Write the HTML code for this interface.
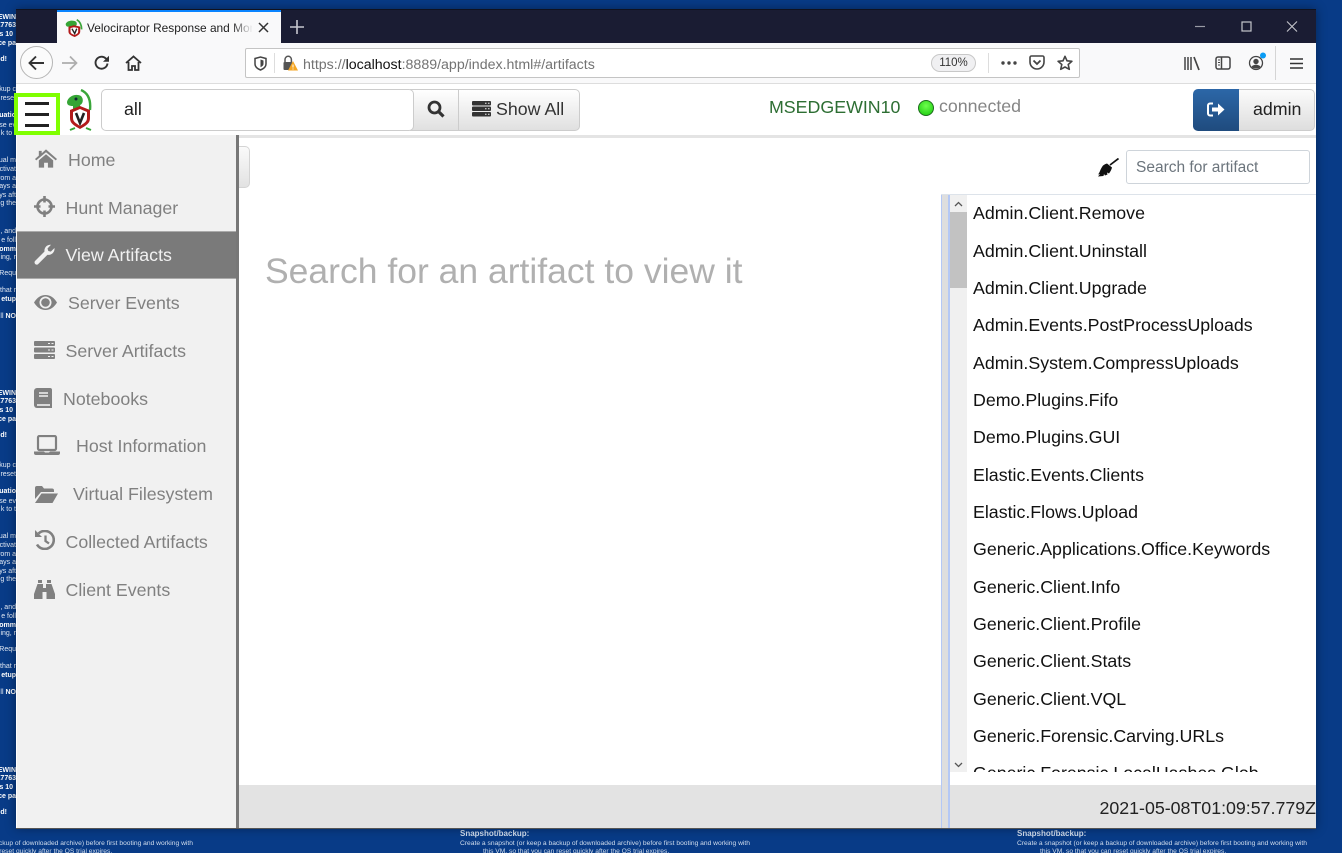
<!DOCTYPE html>
<html lang="en"><head><meta charset="utf-8"><title>Velociraptor Response and Monitoring</title>
<style>
html,body{margin:0;padding:0}
body{width:1342px;height:853px;overflow:hidden;position:relative;background:#083b87;font-family:"Liberation Sans",Arial,sans-serif}
.a,.a *{box-sizing:border-box}
.a{position:absolute}
.t{position:absolute;white-space:nowrap;line-height:20px}
.st{position:absolute;left:0;width:16px;height:376px;overflow:hidden}
.st p{position:absolute;right:0;margin:0;color:#e4ebf5;font-size:7px;line-height:8px;white-space:nowrap}
.st b{color:#fff}
.m{position:absolute;left:0;width:219px;height:48px}
.m span{position:absolute;font-size:17.8px;line-height:20px;color:#808080;white-space:nowrap}
.m svg{position:absolute}
.l{position:absolute;left:973px;font-size:17.8px;line-height:20px;color:#111;white-space:nowrap}
.bt{position:absolute;color:#d0dcec;font-size:6.7px;line-height:8px;white-space:nowrap}
svg{display:block}
</style></head><body>

<!-- desktop strips -->
<div class="st" style="top:0"><p style="top:14px"><b>EWIN</b></p><p style="top:22px"><b>17763</b></p><p style="top:31px;right:3px"><b>s 10</b></p><p style="top:40px"><b>ice pa</b></p><p style="top:56px;right:9px"><b>d!</b></p><p style="top:86px">kup c</p><p style="top:95px">reset</p><p style="top:112px"><b>uatio</b></p><p style="top:122px">se ev</p><p style="top:130px">k to t</p><p style="top:157px">ual m</p><p style="top:166px">ctivat</p><p style="top:175px">rom a</p><p style="top:183px">days a</p><p style="top:192px">ys aft</p><p style="top:200px">g the</p><p style="top:228px">, and</p><p style="top:237px">e foll</p><p style="top:246px"><b>omm</b></p><p style="top:254px">ing, r</p><p style="top:270px">Requ</p><p style="top:287px">that r</p><p style="top:296px"><b>etup</b></p><p style="top:313px">ill <b>NO</b></p></div>
<div class="st" style="top:376px"><p style="top:14px"><b>EWIN</b></p><p style="top:22px"><b>17763</b></p><p style="top:31px;right:3px"><b>s 10</b></p><p style="top:40px"><b>ice pa</b></p><p style="top:56px;right:9px"><b>d!</b></p><p style="top:86px">kup c</p><p style="top:95px">reset</p><p style="top:112px"><b>uatio</b></p><p style="top:122px">se ev</p><p style="top:130px">k to t</p><p style="top:157px">ual m</p><p style="top:166px">ctivat</p><p style="top:175px">rom a</p><p style="top:183px">days a</p><p style="top:192px">ys aft</p><p style="top:200px">g the</p><p style="top:228px">, and</p><p style="top:237px">e foll</p><p style="top:246px"><b>omm</b></p><p style="top:254px">ing, r</p><p style="top:270px">Requ</p><p style="top:287px">that r</p><p style="top:296px"><b>etup</b></p><p style="top:313px">ill <b>NO</b></p></div>
<div class="st" style="top:753px;height:70px"><p style="top:14px"><b>EWIN</b></p><p style="top:22px"><b>17763</b></p><p style="top:31px;right:3px"><b>s 10</b></p><p style="top:40px"><b>ice pa</b></p><p style="top:56px;right:9px"><b>d!</b></p></div>

<div style="position:absolute;left:0;top:828px;width:1342px;height:25px;overflow:hidden">
<b class="bt" style="left:460px;top:2px;font-size:8px">Snapshot/backup:</b>
<b class="bt" style="left:1017px;top:2px;font-size:8px">Snapshot/backup:</b>
<div class="bt" style="left:-97px;top:12px">Create a snapshot (or keep a backup of downloaded archive) before first booting and working with</div>
<div class="bt" style="left:-74px;top:20px">this VM, so that you can reset quickly after the OS trial expires.</div>
<div class="bt" style="left:460px;top:12px">Create a snapshot (or keep a backup of downloaded archive) before first booting and working with</div>
<div class="bt" style="left:483px;top:20px">this VM, so that you can reset quickly after the OS trial expires.</div>
<div class="bt" style="left:1017px;top:12px">Create a snapshot (or keep a backup of downloaded archive) before first booting and working with</div>
<div class="bt" style="left:1040px;top:20px">this VM, so that you can reset quickly after the OS trial expires.</div>
</div>

<!-- window -->
<div class="a" style="left:16px;top:9px;width:1300px;height:819px;background:#fff;box-shadow:0 0 10px rgba(0,0,0,.4)"></div>

<!-- title bar -->
<div class="a" style="left:16px;top:9px;width:1300px;height:34px;background:#1a1c33;border-top:1px solid #10121f"></div>
<div class="a" style="left:57px;top:10px;width:224px;height:33px;background:#f9f9fa;border-top:2px solid #0a84ff"></div>
<svg class="a" style="left:65px;top:19px" width="18" height="18" viewBox="0 0 26 26"><path d="M17 1c5 3 7 8 7 14" fill="none" stroke="#3aa63a" stroke-width="2.5"/><path d="M1 7c2-5 11-6 15-3 2 3 1 6-2 7H4C2 11 1 9 1 7z" fill="#35a535"/><path d="M5 11l8-2 9 2v7c0 4-4 6-8 8-5-2-9-4-9-8z" fill="#b31b1b"/><path d="M8 13l5-1 6 1v5c0 3-3 4-5 5-3-1-6-2-6-5z" fill="#fff"/><path d="M10 14l4 7 3-7" fill="none" stroke="#222" stroke-width="2"/></svg>
<div class="t" style="left:87px;top:18px;width:165px;overflow:hidden;font-size:11.9px;color:#222">Velociraptor Response and Monitoring</div>
<div class="a" style="left:232px;top:18px;width:21px;height:20px;background:linear-gradient(90deg,rgba(249,249,250,0),#f9f9fa)"></div>
<svg class="a" style="left:258px;top:22px" width="11" height="11" viewBox="0 0 11 11"><path d="M1 1l9 9M10 1l-9 9" stroke="#333" stroke-width="1.5"/></svg>
<svg class="a" style="left:290px;top:20px" width="14" height="14" viewBox="0 0 14 14"><path d="M7 0v14M0 7h14" stroke="#c6c7cf" stroke-width="1.6"/></svg>
<svg class="a" style="left:1195px;top:21px" width="108" height="11" viewBox="0 0 108 11"><path d="M0 5.500h10" stroke="#9a9ba6" stroke-width="1.2"/><rect x="47" y="1" width="9" height="9" fill="none" stroke="#c4c5cc" stroke-width="1.2"/><path d="M92 .5l10 10M102 .5l-10 10" stroke="#c4c5cc" stroke-width="1.1"/></svg>

<!-- firefox toolbar -->
<div class="a" style="left:16px;top:43px;width:1300px;height:41px;background:#f9f9fa;border-bottom:1px solid #ddd"></div>
<div class="a" style="left:20px;top:46px;width:33px;height:33px;border-radius:50%;background:#fbfbfb;border:1px solid #b5b5b5"></div>
<svg class="a" style="left:28px;top:55px" width="17" height="16" viewBox="0 0 17 16"><path d="M16 8H2M8 1.500L1.500 8 8 14.500" fill="none" stroke="#333" stroke-width="1.9"/></svg>
<svg class="a" style="left:61px;top:55px" width="17" height="16" viewBox="0 0 17 16"><path d="M1 8h14M9 1.500L15.500 8 9 14.500" fill="none" stroke="#adadad" stroke-width="1.7"/></svg>
<svg class="a" style="left:94px;top:55px" width="16" height="16" viewBox="0 0 16 16"><path d="M13.500 8.500A6 6 0 1 1 11.600 3.300L14 5" fill="none" stroke="#333" stroke-width="1.9"/><path d="M15 .8v6h-6z" fill="#333"/></svg>
<svg class="a" style="left:125px;top:55px" width="17" height="16" viewBox="0 0 17 16"><path d="M1 8l7.500-6.500L16 8M3.500 7v8h3.500v-4h3v4h3.500V7" fill="none" stroke="#333" stroke-width="1.8"/></svg>

<div class="a" style="left:245px;top:48px;width:835px;height:30px;background:#fff;border:1px solid #c4c4c4;border-radius:2px"></div>
<svg class="a" style="left:254px;top:56px" width="13" height="15" viewBox="0 0 13 15"><path d="M1 2.500L6.500 1 12 2.500V8c0 3-3 5-5.500 6C4 13 1 11 1 8z" fill="none" stroke="#444" stroke-width="1.5"/><path d="M6.500 3.500L9.500 4.500V8c0 1.500-1.500 2.500-3 3.200z" fill="#444"/></svg>
<div class="a" style="left:274px;top:53px;width:1px;height:20px;background:#ddd"></div>
<svg class="a" style="left:282px;top:55px" width="16" height="16" viewBox="0 0 16 16"><path d="M3 7V4.500a3.200 3.200 0 0 1 6.400 0V7" fill="none" stroke="#555" stroke-width="1.5"/><rect x="1.500" y="7" width="9" height="8" rx="1" fill="#555"/><path d="M11 6l5 9.500H6z" fill="#f5a623"/><path d="M11 9.500v3M11 13.500v1" stroke="#fff" stroke-width="1"/></svg>
<div class="t" style="left:303px;top:55px;font-size:14.2px;color:#737373">https://<span style="color:#111">localhost</span>:8889/app/index.html#/artifacts</div>
<div class="a" style="left:931px;top:54px;width:45px;height:18px;border-radius:9px;background:#f0f0f2;border:1px solid #c8c8c8;font-size:11.5px;line-height:16px;text-align:center;color:#333">110%</div>
<div class="a" style="left:988px;top:53px;width:1px;height:20px;background:#ddd"></div>
<svg class="a" style="left:1001px;top:61px" width="16" height="4" viewBox="0 0 16 4"><circle cx="2" cy="2" r="1.7" fill="#444"/><circle cx="8" cy="2" r="1.7" fill="#444"/><circle cx="14" cy="2" r="1.7" fill="#444"/></svg>
<svg class="a" style="left:1029px;top:55px" width="16" height="15" viewBox="0 0 16 15"><path d="M2.500 1h11A1.500 1.500 0 0 1 15 2.500V7a7 7 0 0 1-14 0V2.500A1.500 1.500 0 0 1 2.500 1z" fill="none" stroke="#444" stroke-width="1.6"/><path d="M4.500 5.500L8 9l3.500-3.500" fill="none" stroke="#444" stroke-width="1.8"/></svg>
<svg class="a" style="left:1057px;top:55px" width="16" height="16" viewBox="0 0 16 16"><path d="M8 1.300l2 4.500 4.900.5-3.700 3.200 1.100 4.800L8 12l-4.300 2.300 1.100-4.800L1.100 6.300 6 5.800z" fill="none" stroke="#444" stroke-width="1.6" stroke-linejoin="round"/></svg>

<svg class="a" style="left:1184px;top:56px" width="17" height="15" viewBox="0 0 17 15"><path d="M1 1v13M4 1v13M7 1v13" stroke="#444" stroke-width="1.5"/><path d="M10 1l5 13" stroke="#444" stroke-width="1.7"/></svg>
<svg class="a" style="left:1215px;top:56px" width="16" height="14" viewBox="0 0 16 14"><rect x="1" y="1" width="14" height="12" rx="2" fill="none" stroke="#444" stroke-width="1.5"/><path d="M6.500 1v12" stroke="#444" stroke-width="1.5"/><path d="M3 4h2M3 6.500h2M3 9h2" stroke="#444" stroke-width="1"/></svg>
<svg class="a" style="left:1248px;top:52px" width="20" height="19" viewBox="0 0 20 19"><circle cx="8" cy="11" r="6.500" fill="none" stroke="#444" stroke-width="1.3"/><circle cx="8" cy="9.500" r="2.700" fill="#444"/><path d="M3.500 15c1-3 8-3 9 0-2 2-7 2-9 0z" fill="#444"/><circle cx="15" cy="3.500" r="3" fill="#0a9cf5"/></svg>
<div class="a" style="left:1275px;top:46px;width:1px;height:34px;background:#d5d5d5"></div>
<svg class="a" style="left:1290px;top:57px" width="13" height="13" viewBox="0 0 13 13"><path d="M0 2h13M0 6.500h13M0 11h13" stroke="#333" stroke-width="1.5"/></svg>

<!-- app nav -->
<div class="a" style="left:16px;top:84px;width:1300px;height:51px;background:#fff"></div>
<div class="a" style="left:238px;top:135px;width:1078px;height:3px;background:#e4e4e4"></div>
<div class="a" style="left:14px;top:93px;width:46px;height:42px;background:#fff;border:4px solid #7fff00"></div>
<div class="a" style="left:25px;top:102px;width:24px;height:3px;background:#222"></div>
<div class="a" style="left:25px;top:113px;width:24px;height:3px;background:#222"></div>
<div class="a" style="left:25px;top:124px;width:24px;height:3px;background:#222"></div>
<svg class="a" style="left:66px;top:89px" width="27" height="42" viewBox="0 0 27 42"><path d="M15 1c7 3 10 10 9 20" fill="none" stroke="#3aa63a" stroke-width="2.4"/><path d="M1 13C2 7 10 4 15 7c3 3 2 8-1 9l1 4H7l0-3C3 17 1 16 1 13z" fill="#35a535"/><circle cx="10" cy="10" r="1.500" fill="#123"/><path d="M4 21l10-4 10 4v8c0 6-5 8-10 11C9 37 4 35 4 29z" fill="#b31b1b"/><path d="M7 23l7-3 7 3v6c0 4-3 5-7 8-4-3-7-4-7-8z" fill="#fff"/><path d="M10 24l4 10 4-10" fill="none" stroke="#222" stroke-width="2.6"/><path d="M4 41l5-2M25 41l-5-2" stroke="#35a535" stroke-width="2"/></svg>
<div class="a" style="left:410px;top:89px;width:49px;height:42px;background:linear-gradient(#fff,#e0e0e0);border:1px solid #ccc"></div>
<div class="a" style="left:101px;top:89px;width:313px;height:42px;background:#fff;border:1px solid #ccc;border-radius:5px"></div>
<div class="t" style="left:124px;top:99px;font-size:17.8px;color:#222">all</div>
<svg class="a" style="left:427px;top:100px" width="18" height="18" viewBox="0 0 18 18"><circle cx="7.500" cy="7.500" r="5.500" fill="none" stroke="#333" stroke-width="2.8"/><path d="M11.500 11.500l5 5" stroke="#333" stroke-width="3.2"/></svg>
<div class="a" style="left:458px;top:89px;width:122px;height:42px;background:linear-gradient(#fff,#e0e0e0);border:1px solid #ccc;border-radius:0 5px 5px 0"></div>
<svg class="a" style="left:472px;top:101px" width="19" height="16" viewBox="0 0 19 16"><g fill="#333"><rect width="19" height="4.500" rx="1"/><rect y="5.500" width="19" height="4.500" rx="1"/><rect y="11" width="19" height="4.500" rx="1"/></g><path d="M13 2.200h1.500M16 2.200h1.500M13 7.700h1.500M16 7.700h1.500M13 13.200h1.500M16 13.200h1.500" stroke="#eee" stroke-width="1"/></svg>
<div class="t" style="left:496px;top:99px;font-size:17.8px;color:#333">Show All</div>
<div class="t" style="left:769px;top:97px;font-size:17.8px;color:#2d6e33">MSEDGEWIN10</div>
<div class="a" style="left:918px;top:100px;width:16px;height:16px;border-radius:50%;background:radial-gradient(circle at 50% 35%,#6dff4d,#17c60b);border:1px solid #1d6b1d"></div>
<div class="t" style="left:939px;top:96px;font-size:17.8px;color:#858585">connected</div>
<div class="a" style="left:1193px;top:89px;width:46px;height:42px;background:linear-gradient(#2c67a8,#1f4b7e);border-radius:5px 0 0 5px"></div>
<svg class="a" style="left:1207px;top:102px" width="18" height="15" viewBox="0 0 18 15"><path d="M6 1.500H3A2 2 0 0 0 1 3.500v8a2 2 0 0 0 2 2h3" fill="none" stroke="#fff" stroke-width="2"/><path d="M5 5.500h6V1.500l6.500 6-6.500 6v-4H5z" fill="#fff"/></svg>
<div class="a" style="left:1239px;top:89px;width:76px;height:42px;background:linear-gradient(#fbfbfb,#dedede);border:1px solid #ccc;border-left:0;border-radius:0 5px 5px 0"></div>
<div class="t" style="left:1253px;top:99px;font-size:17.8px;color:#222">admin</div>

<!-- sidebar -->
<div class="a" style="left:17px;top:135px;width:219px;height:693px;background:#f1f1f1">
 <div class="a" style="left:0;top:96px;width:219px;height:48px;background:#7a7a7a;border-top:1px solid #aaa;border-bottom:1px solid #aaa"></div>
</div>
<div class="a" style="left:236px;top:135px;width:3px;height:693px;background:#777"></div>

<div class="m" style="left:17px;top:136px">
 <svg style="left:18px;top:13px" width="22" height="19" viewBox="0 0 23 19"><path d="M11.500 0L23 10l-1.300 1.400L11.500 3 1.300 11.400 0 10 4 6.500V1.500h3v2.500z" fill="#808080"/><path d="M4 11.500l7.500-6.500 7.500 6.500V19h-5.500v-5h-4v5H4z" fill="#808080"/></svg>
 <span style="left:51px;top:14px">Home</span>
</div>
<div class="m" style="left:17px;top:184px">
 <svg style="left:17px;top:12px" width="21" height="21" viewBox="0 0 21 21"><circle cx="10.500" cy="10.500" r="7" fill="none" stroke="#808080" stroke-width="2.6"/><path d="M10.500 0v6.500M10.500 14.500v6.500M0 10.500h6.500M14.500 10.500h6.500" stroke="#808080" stroke-width="2.6"/></svg>
 <span style="left:48.500px;top:14px">Hunt Manager</span>
</div>
<div class="m" style="left:17px;top:231px">
 <svg style="left:17px;top:13px" width="21" height="21" viewBox="0 0 21 21"><path d="M1 17L10.500 7.500C10 4 12.500 .5 17 .7L13.500 4.500l.8 2.500 2.500.6L20.500 4c.5 4.500-3.500 7.500-7 6.800L4 20.200c-2 1.500-4.500-1.200-3-3.200z" fill="#f1f1f1"/></svg>
 <span style="left:48.500px;top:14px;color:#f1f1f1">View Artifacts</span>
</div>
<div class="m" style="left:17px;top:279px">
 <svg style="left:17px;top:16px" width="23" height="15" viewBox="0 0 23 15"><path d="M0 7.500C3 2.500 7 0 11.500 0S20 2.500 23 7.500C20 12.500 16 15 11.500 15S3 12.500 0 7.500z" fill="#808080"/><circle cx="11.500" cy="7.500" r="6" fill="#f1f1f1"/><circle cx="11.500" cy="7.500" r="4.300" fill="#808080"/></svg>
 <span style="left:51px;top:14px">Server Events</span>
</div>
<div class="m" style="left:17px;top:327px">
 <svg style="left:17px;top:14px" width="21" height="18" viewBox="0 0 21 18"><g fill="#808080"><rect width="21" height="5" rx="1"/><rect y="6.500" width="21" height="5" rx="1"/><rect y="13" width="21" height="5" rx="1"/></g><path d="M14 2.500h2M17.500 2.500h2M14 9h2M17.500 9h2M14 15.500h2M17.500 15.500h2" stroke="#f1f1f1" stroke-width="1"/></svg>
 <span style="left:48.500px;top:14px">Server Artifacts</span>
</div>
<div class="m" style="left:17px;top:375px">
 <svg style="left:17px;top:13px" width="18" height="20" viewBox="0 0 18 20"><path d="M3 0h13a2 2 0 0 1 2 2v18H3a3 3 0 0 1-3-3V3a3 3 0 0 1 3-3z" fill="#808080"/><path d="M5 5h9M5 8h9" stroke="#f1f1f1" stroke-width="1.4"/><path d="M3 17h13" stroke="#f1f1f1" stroke-width="1.6"/></svg>
 <span style="left:46px;top:14px">Notebooks</span>
</div>
<div class="m" style="left:17px;top:423px">
 <svg style="left:17px;top:12px" width="26" height="20" viewBox="0 0 26 20"><rect x="4" y="1" width="18" height="14" rx="1.500" fill="none" stroke="#808080" stroke-width="2.2"/><path d="M0 16.500h10l1 1h4l1-1h10v1.500a2 2 0 0 1-2 2H2a2 2 0 0 1-2-2z" fill="#808080"/></svg>
 <span style="left:59px;top:13px">Host Information</span>
</div>
<div class="m" style="left:17px;top:471px">
 <svg style="left:18px;top:15px" width="23" height="17" viewBox="0 0 23 17"><path d="M0 2a2 2 0 0 1 2-2h5l2 2.500h8a2 2 0 0 1 2 2V6H6L0 13z" fill="#808080"/><path d="M6.500 7.500H23L17.500 17H0z" fill="#808080"/></svg>
 <span style="left:56px;top:13px">Virtual Filesystem</span>
</div>
<div class="m" style="left:17px;top:518px">
 <svg style="left:18px;top:12px" width="20" height="20" viewBox="0 0 20 20"><path d="M3.500 3.500A9 9 0 1 1 2 14.500" fill="none" stroke="#808080" stroke-width="2.6"/><path d="M0 0l7 7H0z" fill="#808080"/><path d="M10.500 5.500v5.500l3.500 2.500" fill="none" stroke="#808080" stroke-width="2.3"/></svg>
 <span style="left:48.500px;top:14px">Collected Artifacts</span>
</div>
<div class="m" style="left:17px;top:566px">
 <svg style="left:17px;top:14px" width="21" height="19" viewBox="0 0 21 19"><path d="M4 0h4v3H4zM13 0h4v3h-4z" fill="#808080"/><path d="M3.500 4H9v4h3V4h5.500L21 14v5h-8.500v-7h-4v7H0v-5z" fill="#808080"/></svg>
 <span style="left:48.500px;top:14px">Client Events</span>
</div>

<!-- main -->
<div class="a" style="left:239px;top:146px;width:11px;height:42px;background:linear-gradient(#fafafa,#e2e2e2);border:1px solid #d4d4d4;border-left:0;border-radius:0 5px 5px 0"></div>
<svg class="a" style="left:1097px;top:158px" width="22" height="19" viewBox="0 0 22 19"><path d="M21.500 .5L13 7" stroke="#111" stroke-width="1.7"/><path d="M10 5.500l5 4c-.5 2-1.500 4-3 6l-2-1 .5 2-2.500 1-1-1.500-.5 2L1 18.500l2-2.500-2 .5C3 14 3 12 5 9c1-2 3-3 5-3.500z" fill="#111"/></svg>
<div class="a" style="left:1126px;top:150px;width:184px;height:34px;background:#fff;border:1px solid #ced4da;border-radius:3px"></div>
<div class="t" style="left:1136px;top:159px;font-size:15.5px;color:#6c757d;line-height:17px">Search for artifact</div>

<div class="t" style="left:265px;top:248px;font-size:35.5px;line-height:46px;color:#b0b0b0">Search for an artifact to view it</div>

<div class="a" style="left:941px;top:194px;width:375px;height:1px;background:#dde3ea"></div>
<div class="a" style="left:941px;top:195px;width:9px;height:633px;background:#dedede;border-left:1px solid #b4c8f5;border-right:2px solid #b4c8f5"></div>
<div class="a" style="left:950px;top:195px;width:17px;height:577px;background:#f0f0f0"></div>
<div class="a" style="left:950px;top:212px;width:17px;height:76px;background:#c2c2c2"></div>
<svg class="a" style="left:954px;top:201px" width="9" height="6" viewBox="0 0 9 6"><path d="M1 5l3.500-3.500L8 5" fill="none" stroke="#555" stroke-width="1.3"/></svg>
<svg class="a" style="left:954px;top:762px" width="9" height="6" viewBox="0 0 9 6"><path d="M1 1l3.500 3.500L8 1" fill="none" stroke="#555" stroke-width="1.3"/></svg>

<div class="a" style="left:967px;top:195px;width:349px;height:577px;overflow:hidden">
<div class="l" style="left:6px;top:8px">Admin.Client.Remove</div>
<div class="l" style="left:6px;top:46px">Admin.Client.Uninstall</div>
<div class="l" style="left:6px;top:83px">Admin.Client.Upgrade</div>
<div class="l" style="left:6px;top:120px">Admin.Events.PostProcessUploads</div>
<div class="l" style="left:6px;top:158px">Admin.System.CompressUploads</div>
<div class="l" style="left:6px;top:195px">Demo.Plugins.Fifo</div>
<div class="l" style="left:6px;top:232px">Demo.Plugins.GUI</div>
<div class="l" style="left:6px;top:270px">Elastic.Events.Clients</div>
<div class="l" style="left:6px;top:307px">Elastic.Flows.Upload</div>
<div class="l" style="left:6px;top:344px">Generic.Applications.Office.Keywords</div>
<div class="l" style="left:6px;top:382px">Generic.Client.Info</div>
<div class="l" style="left:6px;top:419px">Generic.Client.Profile</div>
<div class="l" style="left:6px;top:456px">Generic.Client.Stats</div>
<div class="l" style="left:6px;top:494px">Generic.Client.VQL</div>
<div class="l" style="left:6px;top:531px">Generic.Forensic.Carving.URLs</div>
<div class="l" style="left:6px;top:568px">Generic.Forensic.LocalHashes.Glob</div>
</div>

<div class="a" style="left:239px;top:785px;width:702px;height:43px;background:#e3e3e3"></div>
<div class="a" style="left:950px;top:785px;width:366px;height:43px;background:#e3e3e3"></div>
<div class="t" style="right:26px;top:798px;font-size:17.8px;color:#222">2021-05-08T01:09:57.779Z</div>
<div class="a" style="left:16px;top:828px;width:1300px;height:1px;background:#555"></div>
</body></html>
